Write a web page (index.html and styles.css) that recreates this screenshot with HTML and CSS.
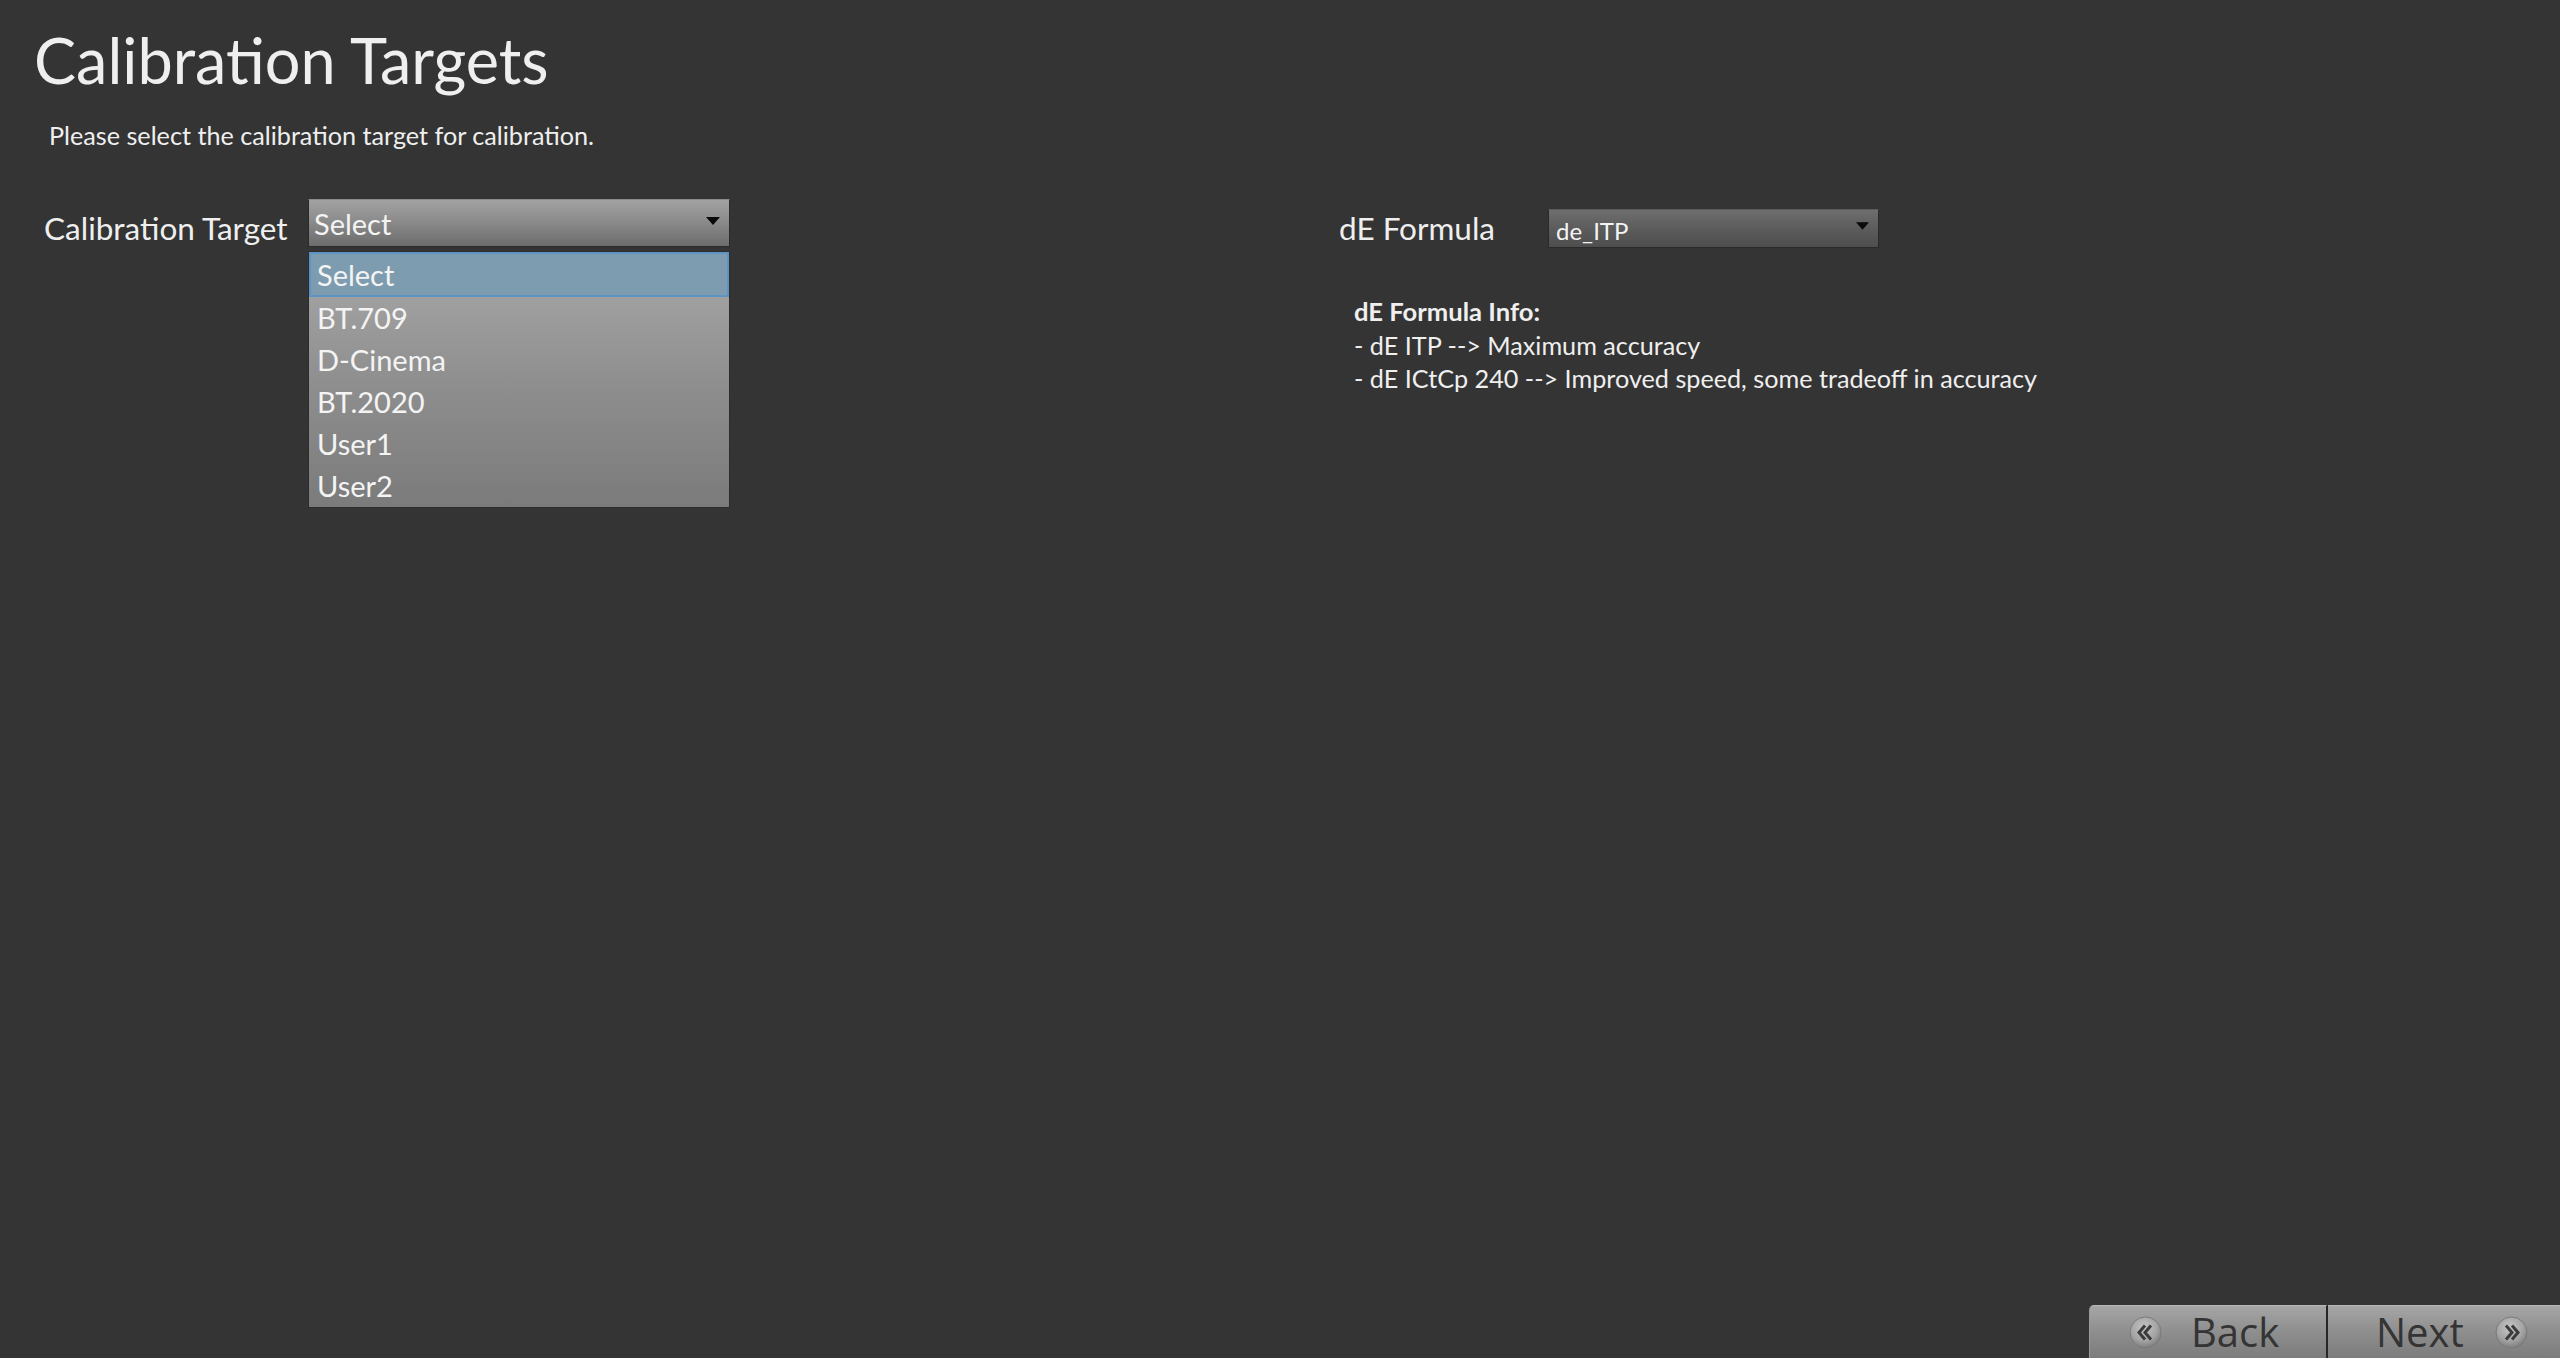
FILE: index.html
```html
<!DOCTYPE html>
<html lang="en">

<head>
    <meta charset="UTF-8">
    <meta name="viewport" content="width=device-width, initial-scale=1.0">
    <title>Calibration Targets</title>
    <link rel="stylesheet" href="styles.css">
</head>

<body>
    <main class="page">
        <h1 class="title">Calibration Targets</h1>
        <p class="intro">Please select the calibration target for calibration.</p>

        <div class="settings">
            <!-- Calibration target, shown with its list open -->
            <div class="field target-field">
                <label class="field-label">Calibration Target</label>
                <div class="combo">
                    <div class="combo-box">
                        <span>Select</span>
                        <svg class="arrow" width="14" height="8" viewBox="0 0 14 8"><path d="M0 0h14L7 8z" fill="#0a0a0a"/></svg>
                    </div>
                    <ul class="combo-list">
                        <li class="selected">Select</li>
                        <li>BT.709</li>
                        <li>D-Cinema</li>
                        <li>BT.2020</li>
                        <li>User1</li>
                        <li>User2</li>
                    </ul>
                </div>
            </div>

            <div class="formula-col">
                <div class="field formula-field">
                    <label class="field-label">dE Formula</label>
                    <div class="combo-box small">
                        <span>de_ITP</span>
                        <svg class="arrow" width="13" height="8" viewBox="0 0 14 8"><path d="M0 0h14L7 8z" fill="#0a0a0a"/></svg>
                    </div>
                </div>
                <div class="info">
                    <strong>dE Formula Info:</strong>
                    <p>- dE ITP --&gt; Maximum accuracy</p>
                    <p>- dE ICtCp 240 --&gt; Improved speed, some tradeoff in accuracy</p>
                </div>
            </div>
        </div>
    </main>

    <footer class="wizard-nav">
        <button class="nav-btn back">
            <svg class="nav-icon" width="33" height="33" viewBox="0 0 33 33">
                <defs>
                    <radialGradient id="knobA" cx="45%" cy="35%" r="70%">
                        <stop offset="0" stop-color="#c6c6c6"/>
                        <stop offset="0.6" stop-color="#a4a4a4"/>
                        <stop offset="1" stop-color="#767676"/>
                    </radialGradient>
                </defs>
                <circle cx="16.5" cy="16.5" r="15.5" fill="url(#knobA)" stroke="#7a7a7a" stroke-width="1"/>
                <path d="M16 9.5l-6 7 6 7M22 9.5l-6 7 6 7" fill="none" stroke="#3c3c3c" stroke-width="3"/>
            </svg>
            <span>Back</span>
        </button>
        <button class="nav-btn next">
            <span>Next</span>
            <svg class="nav-icon" width="33" height="33" viewBox="0 0 33 33">
                <defs>
                    <radialGradient id="knobB" cx="45%" cy="35%" r="70%">
                        <stop offset="0" stop-color="#c6c6c6"/>
                        <stop offset="0.6" stop-color="#a4a4a4"/>
                        <stop offset="1" stop-color="#767676"/>
                    </radialGradient>
                </defs>
                <circle cx="16.5" cy="16.5" r="15.5" fill="url(#knobB)" stroke="#7a7a7a" stroke-width="1"/>
                <path d="M11 9.5l6 7-6 7M17 9.5l6 7-6 7" fill="none" stroke="#3c3c3c" stroke-width="3"/>
            </svg>
        </button>
    </footer>
</body>

</html>
```

FILE: styles.css
```css
* {
    box-sizing: border-box;
}

html,
body {
    height: 100%;
}

body {
    margin: 0;
    background-color: #343434;
    color: #efefef;
    font-family: Lato, "Open Sans", sans-serif;
    display: flex;
    flex-direction: column;
}

.page {
    flex: 1;
    padding: 22px 0 0 34px;
}

.title {
    margin: 0;
    font-size: 63px;
    font-weight: 400;
    line-height: 76px;
}

.intro {
    margin: 20px 0 0 15px;
    font-size: 25.2px;
    line-height: 34px;
}

.settings {
    display: flex;
    margin-top: 47px;
}

.field {
    display: flex;
}

.target-field {
    width: 1305px;
    flex: none;
    padding-left: 10px;
}

.field-label {
    font-size: 31.5px;
    line-height: 48px;
}

.target-field .field-label {
    width: 265px;
    margin-top: 5px;
}

.combo {
    position: relative;
    width: 422px;
    margin-left: -1px;
}

.combo-box {
    display: flex;
    align-items: center;
    justify-content: space-between;
    height: 48px;
    padding: 0 9px 0 5px;
    border: 1px solid #2a2a2a;
    border-top-color: #8a8a8a;
    background: linear-gradient(#a2a2a2, #8c8c8c 45%, #6c6c6c);
    font-size: 29px;
    color: #f4f4f4;
}

.combo-box.small {
    width: 331px;
    height: 39px;
    padding: 0 9px 0 7px;
    background: linear-gradient(#6e6e6e, #5c5c5c 50%, #4e4e4e);
    border-top-color: #5a5a5a;
    font-size: 24px;
}

.combo-box.small span {
    margin-top: 4px;
}

.arrow {
    display: block;
    margin-top: -4px;
}

/* open list of the target combo */
.combo-list {
    position: absolute;
    top: 52px;
    left: 0;
    width: 422px;
    margin: 0;
    padding: 0;
    list-style: none;
    border: 1px solid #2c2c2c;
    background: linear-gradient(#a9a9a9, #8f8f8f 50%, #7b7b7b);
    font-size: 29px;
}

.combo-list li {
    height: 42px;
    line-height: 42px;
    padding-left: 8px;
    color: #f4f4f4;
}

.combo-list li.selected {
    height: 45px;
    line-height: 41px;
    padding-left: 6px;
    border: 2px solid #5e93c6;
    background-color: #7e9caf;
}

.formula-field {
    align-items: center;
    height: 48px;
    margin-top: 5px;
}

.formula-field .field-label {
    width: 209px;
}

.info {
    margin: 43px 0 0 15px;
    font-size: 25.2px;
    line-height: 33.5px;
}

.info strong {
    display: block;
    font-weight: 700;
    font-size: 25.6px;
}

.info p {
    margin: 0;
}

.wizard-nav {
    display: flex;
    justify-content: flex-end;
}

.nav-btn {
    display: flex;
    align-items: center;
    height: 53px;
    margin: 0;
    padding: 0;
    border: none;
    border-top: 1px solid #b8b8b8;
    background: linear-gradient(#a6a6a6, #8e8e8e 50%, #7c7c7c);
    font-family: "Open Sans", sans-serif;
    font-size: 40px;
    font-weight: 500;
    color: #343434;
    cursor: pointer;
}

.nav-btn.back {
    width: 239px;
    padding-left: 39px;
    gap: 29px;
    border-top-left-radius: 5px;
    border-left: 1px solid #9a9a9a;
    border-right: 2px solid #262626;
}

.nav-btn.next {
    width: 232px;
    padding-left: 48px;
    gap: 31px;
}

.nav-btn span {
    margin-top: -2px;
}

.nav-icon {
    display: block;
    flex: none;
}
```
